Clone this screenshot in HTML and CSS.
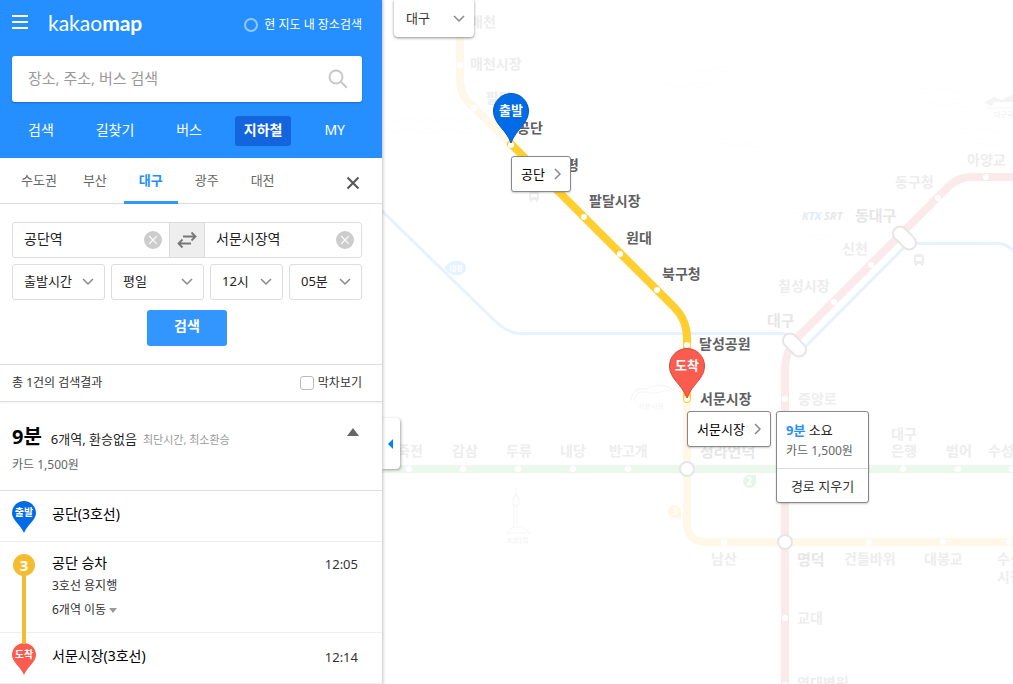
FILE: index.html
```html
<!DOCTYPE html>
<html lang="ko">
<head>
    <meta charset="UTF-8">
    <meta name="viewport" content="width=device-width, initial-scale=1.0">
    <title>카카오맵 지하철</title>
    <link rel="stylesheet" href="styles.css">
</head>
<body>
    <aside class="sidebar">
        <header class="header">
            <div class="header-top">
                <button type="button" class="icon-btn" aria-label="메뉴">
                    <svg width="16" height="16" viewBox="0 0 16 16"><path d="M0 1h16M0 7h16M0 13h16" stroke="#fff" stroke-width="2"/></svg>
                </button>
                <a href="#" class="logo">kakao<b>map</b></a>
                <label class="in-map"><input type="checkbox"> 현 지도 내 장소검색</label>
            </div>
            <form class="search-box">
                <input type="text" placeholder="장소, 주소, 버스 검색" aria-label="장소 검색">
                <button type="button" class="icon-btn" aria-label="검색">
                    <svg width="20" height="20" viewBox="0 0 20 20" fill="none" stroke="#c8c8c8" stroke-width="2"><circle cx="8" cy="8" r="6.5"/><path d="M12.8 12.8l6 6"/></svg>
                </button>
            </form>
            <nav class="main-nav">
                <a href="#">검색</a>
                <a href="#">길찾기</a>
                <a href="#">버스</a>
                <a href="#" class="on">지하철</a>
                <a href="#">MY</a>
            </nav>
        </header>

        <nav class="region-tabs">
            <a href="#">수도권</a>
            <a href="#">부산</a>
            <a href="#" class="on">대구</a>
            <a href="#">광주</a>
            <a href="#">대전</a>
            <button type="button" class="icon-btn close" aria-label="닫기">
                <svg width="14" height="14" viewBox="0 0 14 14"><path d="M1.5 1.5l11 11M12.5 1.5l-11 11" stroke="#555" stroke-width="2"/></svg>
            </button>
        </nav>

        <form class="route-form">
            <div class="stations">
                <div class="station">
                    <input type="text" value="공단역" aria-label="출발역">
                    <button type="button" class="icon-btn" aria-label="출발역 지우기">
                        <svg width="18" height="18" viewBox="0 0 18 18"><circle cx="9" cy="9" r="9" fill="#ccc"/><path d="M5.2 5.2l7.6 7.6M12.8 5.2l-7.6 7.6" stroke="#fff" stroke-width="1.2"/></svg>
                    </button>
                </div>
                <button type="button" class="swap" aria-label="출발 도착 바꾸기">
                    <svg width="20" height="18" viewBox="0 0 20 18" fill="none" stroke="#777" stroke-width="1.8"><path d="M6 5.500h12M14.500 1.500l4 4-4 4M14 12.500H2M5.500 8.500l-4 4 4 4"/></svg>
                </button>
                <div class="station">
                    <input type="text" value="서문시장역" aria-label="도착역">
                    <button type="button" class="icon-btn" aria-label="도착역 지우기">
                        <svg width="18" height="18" viewBox="0 0 18 18"><circle cx="9" cy="9" r="9" fill="#ccc"/><path d="M5.2 5.2l7.6 7.6M12.8 5.2l-7.6 7.6" stroke="#fff" stroke-width="1.2"/></svg>
                    </button>
                </div>
            </div>
            <div class="times">
                <div class="select wide">
                    <select aria-label="시간 기준"><option>출발시간</option><option>도착시간</option></select>
                    <svg class="arrow" width="12" height="8" viewBox="0 0 12 8"><path d="M1 1l5 5 5-5"/></svg>
                </div>
                <div class="select wide">
                    <select aria-label="요일"><option>평일</option><option>토요일</option><option>휴일</option></select>
                    <svg class="arrow" width="12" height="8" viewBox="0 0 12 8"><path d="M1 1l5 5 5-5"/></svg>
                </div>
                <div class="select">
                    <select aria-label="시"><option>12시</option><option>13시</option></select>
                    <svg class="arrow" width="12" height="8" viewBox="0 0 12 8"><path d="M1 1l5 5 5-5"/></svg>
                </div>
                <div class="select">
                    <select aria-label="분"><option>05분</option><option>10분</option></select>
                    <svg class="arrow" width="12" height="8" viewBox="0 0 12 8"><path d="M1 1l5 5 5-5"/></svg>
                </div>
            </div>
            <button type="button" class="submit">검색</button>
        </form>

        <div class="result-head">
            <span>총 1건의 검색결과</span>
            <label><input type="checkbox"> 막차보기</label>
        </div>

        <section class="summary">
            <div>
                <p class="summary-main"><strong>9분</strong><span>6개역, 환승없음</span><small>최단시간, 최소환승</small></p>
                <p class="fare">카드 1,500원</p>
            </div>
            <button type="button" class="icon-btn fold" aria-label="접기">
                <svg width="12" height="8" viewBox="0 0 12 8"><path d="M6 0l6 8H0z" fill="#666"/></svg>
            </button>
        </section>

        <ol class="steps">
            <li class="step">
                <div class="mark">
                    <svg width="24" height="32" viewBox="0 0 24 32"><path d="M12 0a12 12 0 0 1 12 12c0 7-8 11-12 20C8 23 0 19 0 12A12 12 0 0 1 12 0z" fill="#006be6"/><text x="12" y="15" class="mark-text">출발</text></svg>
                </div>
                <p class="name">공단(3호선)</p>
            </li>
            <li class="step ride">
                <div class="mark"><span class="line-no">3</span></div>
                <div class="ride-info">
                    <p class="name">공단 승차</p>
                    <p>3호선 용지행</p>
                    <p>6개역 이동 <svg width="8" height="5" viewBox="0 0 8 5"><path d="M0 0h8L4 5z" fill="#999"/></svg></p>
                </div>
                <time>12:05</time>
            </li>
            <li class="step">
                <div class="mark">
                    <svg width="24" height="32" viewBox="0 0 24 32"><path d="M12 0a12 12 0 0 1 12 12c0 7-8 11-12 20C8 23 0 19 0 12A12 12 0 0 1 12 0z" fill="#fc5c50"/><text x="12" y="15" class="mark-text">도착</text></svg>
                </div>
                <p class="name">서문시장(3호선)</p>
                <time>12:14</time>
            </li>
        </ol>
    </aside>

    <main class="map">
        <svg class="canvas" width="1600" height="1200" viewBox="382 0 1600 1200">
            <!-- water -->
            <g fill="none" stroke="#fafdfe" stroke-width="1">
                <path d="M383 120q5-4 10 0t10 0 10 0 10 0 10 0 10 0 10 0 10 0 10 0M383 130q5-4 10 0t10 0 10 0 10 0 10 0 10 0 10 0 10 0 10 0M665 86q5-4 10 0t10 0 10 0 10 0 10 0M690 70q5-4 10 0t10 0 10 0 10 0 10 0M720 145q5-4 10 0t10 0 10 0 10 0M790 215q5-4 10 0t10 0 10 0M805 238q5-4 10 0t10 0 10 0M920 90q5-4 10 0t10 0 10 0 10 0M930 105q5-4 10 0t10 0 10 0 10 0M960 130q5-4 10 0t10 0 10 0 10 0M975 145q5-4 10 0t10 0 10 0"/>
            </g>

            <!-- lines off the route -->
            <g fill="none" stroke-width="3">
                <path d="M382 211l112 109q14 13.500 26 13.500h262q6 0 12 8M799 353L908 243.500h90q10 0 20 12" stroke="#e6f2fe"/>
            </g>
            <g fill="none" stroke-width="8">
                <path d="M382 469h1600" stroke="#ecf7ee"/>
                <path d="M785 1200V370q0-20 13-33L948 187q10-10 24-10h1000" stroke="#fbeaec"/>
                <path d="M460 0v80q0 15 11 25l40 39M687 399v123q0 20 20 20h1200" stroke="#fff8e8"/>
            </g>
            <g fill="#fff">
                <circle cx="409" cy="469" r="3"/><circle cx="463" cy="469" r="3"/><circle cx="518" cy="469" r="3"/><circle cx="573" cy="469" r="3"/><circle cx="628" cy="469" r="3"/><circle cx="903" cy="469" r="3"/><circle cx="958" cy="469" r="3"/><circle cx="1012" cy="469" r="3"/>
                <circle cx="460" cy="65" r="3"/><circle cx="474" cy="108" r="3"/><circle cx="724" cy="542" r="3"/><circle cx="869" cy="542" r="3"/><circle cx="943" cy="542" r="3"/><circle cx="1009" cy="542" r="3"/>
                <circle cx="785" cy="399" r="3"/><circle cx="785" cy="618" r="3"/><circle cx="785" cy="685" r="3"/><circle cx="834" cy="302" r="3"/><circle cx="871" cy="265" r="3"/><circle cx="938" cy="198" r="3"/><circle cx="986" cy="177" r="3"/>
            </g>
            <g fill="#fff" stroke="#e6e6e6" stroke-width="2">
                <circle cx="687" cy="469" r="7"/>
                <circle cx="785" cy="542" r="7"/>
                <rect x="781" y="338" width="27" height="14" rx="7" transform="rotate(45 794.5 345)"/>
                <rect x="891" y="231" width="27" height="14" rx="7" transform="rotate(45 904.5 238)"/>
            </g>

            <!-- badges and landmarks -->
            <path d="M444 268q6-7 10-7h5a7 7 0 0 1 0 14h-5q-4 0-10-7z" fill="#e6f2fe"/>
            <text x="456" y="271" class="tiny on-badge">대경</text>
            <path d="M756 475v7a6.500 6.500 0 1 1-6-7z" fill="#e6f5e9"/>
            <text x="749" y="485" class="badge-no">2</text>
            <path d="M681 518h-6a6.500 6.500 0 1 1 6-6z" fill="#fff6e2"/>
            <text x="675" y="515" class="badge-no">3</text>
            <g fill="none" stroke="#f5f5f5">
                <path d="M631 401c0-10 8-14 16-12 6-5 20-5 24 0 9 0 15 7 16 12M634 401c0-7 6-10 13-9 8 4 17-3 24-1"/>
                <path d="M514 526v-20h3v20M516 488v9M513 499l3-5 3 5v6h-6zM507 533l6-6h9l8 6z"/>
            </g>
            <path d="M984 103l10-6 8 3 12-6v8h-20l-2 4z" fill="#f3f3f3"/>
            <path d="M987 108h30" stroke="#f5f5f5"/>
            <g fill="#eee">
                <path d="M914 257q0-3 3-3h4q3 0 3 3v7h-1v2h-2v-2h-4v2h-2v-2h-1zm2 0v4h6v-4z" fill-rule="evenodd"/>
                <path d="M529 194q0-3 3-3h4q3 0 3 3v6h-1v2h-2v-2h-4v2h-2v-2h-1zm2 0v3h6v-3z" fill-rule="evenodd"/>
            </g>
            <text x="651" y="409" class="tiny">서문시장</text>
            <text x="518" y="543" class="tiny">83타워</text>
            <text x="1007" y="117" class="tiny">대구국제</text>
            <text x="802" y="220" class="rail ktx">KTX</text>
            <text x="824" y="220" class="rail">SRT</text>

            <!-- faded station names -->
            <g class="names off">
                <text x="470" y="27">매천</text>
                <text x="470" y="69">매천시장</text>
                <text x="486" y="103">팔달</text>
                <text x="397" y="456">죽전</text>
                <text x="452" y="456">감삼</text>
                <text x="506" y="456">두류</text>
                <text x="560" y="456">내당</text>
                <text x="609" y="456">반고개</text>
                <text x="967" y="165">아양교</text>
                <text x="895" y="187">동구청</text>
                <text x="842" y="254">신천</text>
                <text x="778" y="291">칠성시장</text>
                <text x="798" y="404">중앙로</text>
                <text x="891" y="439">대구</text>
                <text x="891" y="456">은행</text>
                <text x="946" y="456">범어</text>
                <text x="988" y="456">수성구청</text>
                <text x="711" y="564">남산</text>
                <text x="844" y="564">건들바위</text>
                <text x="924" y="564">대봉교</text>
                <text x="997" y="564">수성</text>
                <text x="997" y="582">시장</text>
                <text x="797" y="623">교대</text>
                <text x="797" y="688">영대병원</text>
                <g class="transfer">
                    <text x="855" y="221">동대구</text>
                    <text x="767" y="326">대구</text>
                    <text x="700" y="457">청라언덕</text>
                    <text x="797" y="565">명덕</text>
                </g>
            </g>

            <!-- selected route -->
            <path d="M511 144l163 163q13 13 13 31v61" fill="none" stroke="#ffcf31" stroke-width="8" stroke-linecap="round"/>
            <g fill="#fff">
                <circle cx="511" cy="145" r="3"/><circle cx="584" cy="217" r="3"/><circle cx="620" cy="254" r="3"/><circle cx="657" cy="290" r="3"/><circle cx="687" cy="345" r="3"/><circle cx="687" cy="399" r="3"/>
            </g>
            <g class="names">
                <text x="517" y="133">공단</text>
                <text x="553" y="170">만평</text>
                <text x="589" y="206">팔달시장</text>
                <text x="626" y="243">원대</text>
                <text x="662" y="279">북구청</text>
                <text x="699" y="349">달성공원</text>
                <text x="700" y="404">서문시장</text>
            </g>

            <g stroke-width="1">
                <path d="M511 143c-5-14-17.500-19-17.500-32a17.500 17.500 0 0 1 35 0c0 13-12.500 18-17.500 32z" fill="#006be6" stroke="#005bc4"/>
                <path d="M687 398c-5-14-17.500-19-17.500-32a17.500 17.500 0 0 1 35 0c0 13-12.500 18-17.500 32z" fill="#fc5c50" stroke="#d14a40"/>
            </g>
            <text x="511" y="115" class="pin-text">출발</text>
            <text x="687" y="370" class="pin-text">도착</text>
        </svg>

        <div class="select region-select">
            <select aria-label="지역"><option>대구</option><option>부산</option></select>
            <svg class="arrow" width="12" height="8" viewBox="0 0 12 8"><path d="M1 1l5 5 5-5"/></svg>
        </div>

        <button type="button" class="handle" aria-label="패널 닫기">
            <svg width="5" height="10" viewBox="0 0 5 10"><path d="M5 0v10L0 5z" fill="#0080ff"/></svg>
        </button>

        <a href="#" class="bubble start">공단
            <svg width="7" height="12" viewBox="0 0 7 12"><path d="M1 1l5 5-5 5" fill="none" stroke="#888" stroke-width="1.500"/></svg>
        </a>
        <a href="#" class="bubble end">서문시장
            <svg width="7" height="12" viewBox="0 0 7 12"><path d="M1 1l5 5-5 5" fill="none" stroke="#888" stroke-width="1.500"/></svg>
        </a>

        <div class="route-card">
            <div class="route-info">
                <p class="took"><em>9분</em> 소요</p>
                <p class="fare">카드 1,500원</p>
            </div>
            <button type="button">경로 지우기</button>
        </div>
    </main>
</body>
</html>
```

FILE: styles.css
```css
* {
    box-sizing: border-box;
}
body {
    display: flex;
    height: 100vh;
    margin: 0;
    overflow: hidden;
    font-family: "Noto Sans", "Noto Sans CJK KR", sans-serif;
    font-size: 12px;
    line-height: 18px;
    color: #333;
    background: #fff;
}
p, ol {
    margin: 0;
    padding: 0;
    list-style: none;
}
a {
    color: inherit;
    text-decoration: none;
}
input, select, button {
    margin: 0;
    font: inherit;
    color: inherit;
}
button {
    cursor: pointer;
}
svg {
    display: block;
}
.icon-btn {
    padding: 0;
    border: 0;
    background: none;
}

/* sidebar */
.sidebar {
    position: relative;
    z-index: 1;
    flex: none;
    width: 382px;
    overflow: hidden;
    background: #fff;
    box-shadow: 0 0 3px 1px rgba(0, 0, 0, 0.25);
}
.header {
    padding: 8px 20px 12px 12px;
    background: #258fff;
    color: #fff;
}
.header-top {
    display: flex;
    align-items: center;
    height: 30px;
}
.logo {
    margin-left: 20px;
    font-family: Lato, sans-serif;
    font-size: 21px;
    line-height: 30px;
}
.in-map {
    display: flex;
    align-items: center;
    gap: 6px;
    margin-left: auto;
    padding-top: 3px;
}
.in-map input {
    appearance: none;
    width: 14px;
    height: 14px;
    border: 2px solid #92c7ff;
    border-radius: 50%;
}
.search-box {
    display: flex;
    align-items: center;
    height: 46px;
    margin-top: 18px;
    padding: 0 14px 0 16px;
    border-radius: 3px;
    background: #fff;
    box-shadow: 0 1px 2px rgba(0, 0, 0, 0.25);
}
.search-box input {
    flex: 1;
    min-width: 0;
    padding: 0 0 2px;
    border: 0;
    outline: 0;
    font-size: 15px;
    line-height: 24px;
}
.search-box input::placeholder {
    color: #999;
}
.main-nav {
    display: flex;
    justify-content: space-between;
    margin: 14px 8px 0 7px;
    font-size: 14px;
    line-height: 28px;
}
.main-nav a {
    height: 30px;
    padding: 0 9px;
    border-radius: 3px;
}
.main-nav .on {
    background: #1365dd;
    font-weight: bold;
}

.region-tabs {
    display: flex;
    height: 46px;
    padding-left: 6px;
    gap: 2px;
    border-bottom: 1px solid #ddd;
    font-size: 13px;
    line-height: 44px;
    color: #666;
}
.region-tabs a {
    height: 46px;
    padding: 0 15px;
}
.region-tabs a:first-child {
    padding-right: 9px;
}
.region-tabs .on {
    border-bottom: 3px solid #3396ff;
    color: #258fff;
    font-weight: bold;
}
.close {
    margin: 4px 22px 0 auto;
}

.route-form {
    padding: 18px 20px 18px 12px;
    border-bottom: 1px solid #ddd;
    color: #222;
}
.stations {
    display: flex;
    height: 36px;
    border: 1px solid #ddd;
    border-radius: 3px;
}
.station {
    display: flex;
    flex: 1;
    align-items: center;
    min-width: 0;
    padding: 0 7px 0 11px;
}
.station input {
    flex: 1;
    min-width: 0;
    padding: 0 0 2px;
    border: 0;
    outline: 0;
    font-size: 14px;
    line-height: 20px;
}
.swap {
    display: flex;
    align-items: center;
    justify-content: center;
    width: 36px;
    padding: 0;
    border: solid #ddd;
    border-width: 0 1px;
    background: #eee;
}
.times {
    display: flex;
    gap: 6px;
    margin-top: 6px;
}
.select {
    position: relative;
    flex: 73;
}
.select.wide {
    flex: 93;
}
.select select {
    appearance: none;
    width: 100%;
    height: 36px;
    padding: 0 11px 2px;
    border: 1px solid #ddd;
    border-radius: 3px;
    background: #fff;
    font-size: 13px;
}
.arrow {
    position: absolute;
    top: 50%;
    right: 11px;
    margin-top: -4px;
    fill: none;
    stroke: #888;
    stroke-width: 1.5;
    pointer-events: none;
}
.submit {
    display: block;
    width: 80px;
    height: 36px;
    margin: 10px auto 0;
    padding: 0 0 4px;
    border: 0;
    border-radius: 3px;
    background: #3396ff;
    color: #fff;
    font-size: 14px;
    font-weight: bold;
}

.result-head {
    display: flex;
    align-items: center;
    justify-content: space-between;
    height: 37px;
    padding: 0 20px 0 12px;
    border-bottom: 1px solid #ddd;
    box-shadow: 0 1px 2px rgba(0, 0, 0, 0.05);
}
.result-head label {
    display: flex;
    align-items: center;
    gap: 4px;
}
.result-head input {
    appearance: none;
    width: 14px;
    height: 14px;
    border: 1px solid #bbb;
    border-radius: 3px;
    background: #fff;
}
.summary {
    display: flex;
    justify-content: space-between;
    padding: 19px 23px 16px 12px;
    border-bottom: 1px solid #ddd;
}
.summary-main {
    display: flex;
    align-items: baseline;
    line-height: 32px;
    color: #000;
}
.summary-main strong {
    margin-right: 9px;
    font-size: 20px;
}
.summary-main span {
    margin-right: 6px;
    font-size: 13px;
    color: #222;
}
.summary-main small {
    font-size: 11px;
    color: #999;
}
.fare {
    color: #666;
}
.fold {
    align-self: flex-start;
    margin-top: 7px;
}

.step {
    display: flex;
    border-bottom: 1px solid #eee;
    padding: 10px 24px 0 12px;
    height: 51px;
}
.mark {
    width: 40px;
}
.mark-text {
    fill: #fff;
    font-size: 10px;
    font-weight: bold;
    text-anchor: middle;
}
.name {
    font-size: 14px;
    line-height: 26px;
    color: #000;
}
.step time {
    margin-left: auto;
    font-size: 13px;
    line-height: 28px;
}
.ride {
    height: 91px;
}
.ride .mark {
    position: relative;
}
.ride .mark::before {
    content: "";
    position: absolute;
    top: 12px;
    left: 10px;
    width: 4px;
    height: 80px;
    background: #f4bd31;
}
.line-no {
    position: relative;
    display: block;
    width: 22px;
    margin: 2px 0 0 1px;
    border-radius: 50%;
    background: #f4bd31;
    color: #fff;
    font-size: 15px;
    font-weight: bold;
    line-height: 22px;
    text-align: center;
}
.ride-info {
    line-height: 24px;
}
.ride-info .name {
    line-height: 22px;
}
.ride-info svg {
    display: inline;
    vertical-align: middle;
}
.ride time {
    line-height: 24px;
}

/* map */
.map {
    position: relative;
    flex: 1;
    overflow: hidden;
}
.canvas {
    position: absolute;
    top: 0;
    left: 0;
}
.names {
    fill: #606060;
    font-size: 14px;
    font-weight: bold;
}
.names.off {
    fill: #ededed;
}
.names .transfer {
    fill: #e6e6e6;
    font-size: 15px;
}
.pin-text {
    fill: #fff;
    font-size: 13px;
    font-weight: bold;
    text-anchor: middle;
}
.tiny {
    fill: #f0f0f0;
    font-size: 7px;
    text-anchor: middle;
}
.on-badge {
    fill: #fff;
    font-weight: bold;
}
.badge-no {
    fill: #fff;
    font-size: 10px;
    font-weight: bold;
    text-anchor: middle;
}
.rail {
    fill: #e8e8e8;
    font-size: 11px;
    font-style: italic;
    font-weight: bold;
}
.ktx {
    fill: #e2ebf6;
}
.region-select {
    position: absolute;
    top: 0;
    left: 12px;
    width: 80px;
}
.region-select select {
    height: 37px;
    padding-left: 12px;
    border: 0;
    border-radius: 0 0 4px 4px;
    box-shadow: 0 1px 3px rgba(0, 0, 0, 0.45);
}
.region-select .arrow {
    right: 9px;
}
.handle {
    position: absolute;
    top: 418px;
    left: 0;
    display: flex;
    align-items: center;
    width: 18px;
    height: 51px;
    padding: 0 0 0 6px;
    border: 0;
    border-radius: 0 4px 4px 0;
    background: #fff;
    box-shadow: 1px 1px 3px rgba(0, 0, 0, 0.35);
}
.bubble, .route-card {
    position: absolute;
    border: 1px solid #888;
    border-radius: 3px;
    background: #fff;
    box-shadow: 0 1px 2px rgba(0, 0, 0, 0.2);
    font-size: 13px;
}
.bubble {
    display: flex;
    align-items: center;
    gap: 9px;
    height: 36px;
    padding: 0 9px;
    color: #000;
}
.bubble.start {
    top: 156px;
    left: 129px;
}
.bubble.end {
    top: 411px;
    left: 305px;
}
.route-card {
    top: 411px;
    left: 394px;
    width: 93px;
}
.route-info {
    padding: 7px 9px;
    border-bottom: 1px solid #ddd;
}
.took {
    line-height: 22px;
    color: #222;
}
.took em {
    color: #258fff;
    font-style: normal;
    font-weight: bold;
}
.route-info .fare {
    font-size: 12px;
    line-height: 20px;
}
.route-card button {
    display: block;
    width: 100%;
    height: 33px;
    padding: 0;
    border: 0;
    background: none;
}
```
